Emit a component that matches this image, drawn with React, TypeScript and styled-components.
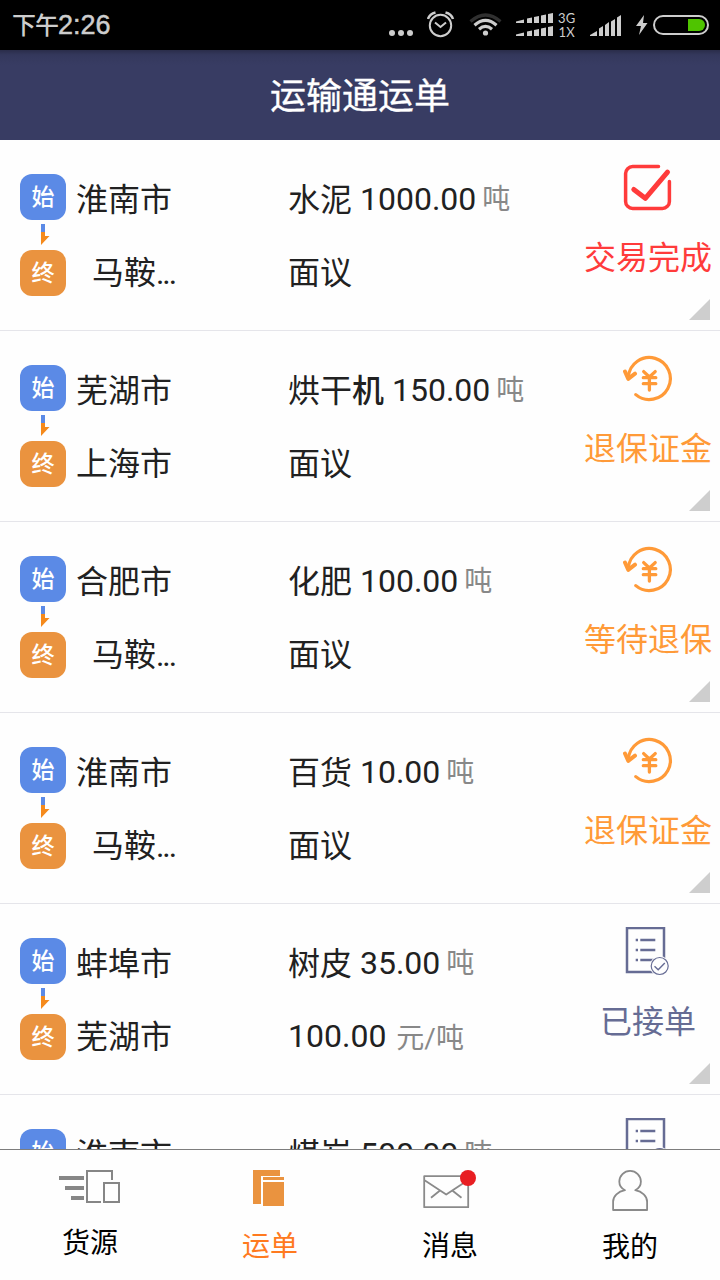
import React from 'react';
import styled, { createGlobalStyle } from 'styled-components';

const Global = createGlobalStyle`
  * { box-sizing: border-box; }
  body { margin: 0; background: #fff; }
  svg { display: block; flex: none; }
`;

const Screen = styled.div`
  display: flex;
  flex-direction: column;
  width: 720px;
  height: 1280px;
  overflow: hidden;
  background: #fefefe;
  color: #212121;
  font-family: Roboto, 'Noto Sans CJK SC', sans-serif;
`;

const StatusBar = styled.div`
  display: flex;
  flex: none;
  align-items: center;
  height: 50px;
  padding: 0 11px 0 12px;
  background: #000;
  color: #cdcdcd;
`;

const Clock = styled.div`
  display: flex;
  flex: 1;
  font: 500 24px/47px 'Noto Sans CJK SC', sans-serif;
  letter-spacing: -1px;
`;

const Digits = styled.span`
  font: 27px/50px 'Liberation Sans', sans-serif;
  letter-spacing: 0;
  -webkit-text-stroke: 0.5px #cdcdcd;
`;

const StatusIcon = styled.svg<{ $gap: number }>`
  height: 50px;
  margin-right: ${(p) => p.$gap}px;
`;

const Network = styled.div`
  width: 17px;
  margin: 0 15px 0 5px;
  font: 13px/14px Lato, sans-serif;
  letter-spacing: 0.3px;
  text-align: right;
  white-space: nowrap;
`;

const Header = styled.header`
  flex: none;
  height: 90px;
  background: linear-gradient(#2a2d4a 0, #34385c 5px, #383c63 15px);
  color: #fff;
  text-align: center;
  font-size: 36px;
  line-height: 95px;
  -webkit-text-stroke: 0.3px #fff;
`;

const List = styled.main`
  flex: 1;
  min-height: 0;
  overflow: hidden;
`;

const Row = styled.article`
  position: relative;
  display: flex;
  height: 191px;
  padding-left: 20px;
  border-bottom: 1px solid #e5e5ea;
`;

const Route = styled.div`
  display: flex;
  flex-direction: column;
  align-items: center;
  width: 46px;
  padding-top: 34px;
`;

const Stop = styled.div<{ $color: string }>`
  width: 46px;
  height: 46px;
  border-radius: 12px;
  background: ${(p) => p.$color};
  color: #fff;
  font-size: 23px;
  font-weight: 500;
  line-height: 48px;
  text-align: center;
`;

const Texts = styled.div<{ $width: number }>`
  width: ${(p) => p.$width}px;
  padding-top: 36px;
`;

const Cities = styled(Texts)`
  margin-left: 10px;
`;

const Line = styled.div<{ $indent?: boolean }>`
  height: 73px;
  padding-left: ${(p) => (p.$indent ? 16 : 0)}px;
  font-size: 32px;
  line-height: 48px;
  white-space: pre;
`;

const Amount = styled.span`
  position: relative;
  top: -1px;
`;

const Dots = styled.span`
  letter-spacing: -2.1px;
`;

const Heavy = styled.span`
  font-weight: 500;
`;

const Unit = styled.span<{ $gap: number; $raise: number }>`
  position: relative;
  top: ${(p) => -p.$raise}px;
  margin-left: ${(p) => p.$gap}px;
  color: #888;
  font-size: 28px;
`;

const State = styled.div<{ $color: string }>`
  display: flex;
  flex-direction: column;
  align-items: center;
  width: 144px;
  margin-left: auto;
  padding-top: 23px;
  color: ${(p) => p.$color};
  font-size: 32px;
  line-height: 48px;
`;

const StateLabel = styled.div`
  margin-top: 21px;
`;

const Corner = styled.div`
  position: absolute;
  right: 10px;
  bottom: 10px;
  width: 21px;
  height: 21px;
  background: #cecece;
  clip-path: polygon(100% 0, 100% 100%, 0 100%);
`;

const TabBar = styled.nav`
  display: flex;
  flex: none;
  height: 131px;
  border-top: 1px solid #7d7d7d;
  background: #fefefe;
`;

const Tab = styled.div<{ $active?: boolean }>`
  display: flex;
  flex: 1;
  flex-direction: column;
  align-items: center;
  padding-top: 20px;
  color: ${(p) => (p.$active ? '#ff7a1f' : '#000')};
  font-size: 28px;
  line-height: 40px;
`;

const TabLabel = styled.div<{ $top: number }>`
  margin-top: ${(p) => p.$top}px;
`;

const RouteArrow = () => (
  <svg width="46" height="30" viewBox="0 0 46 30">
    <path d="M21 4h4v8h-4z" fill="#5b8ae6" />
    <path d="M21 12h4v4h4.500L21 25z" fill="#f58a1c" />
  </svg>
);

const DoneIcon = () => (
  <svg width="50" height="50" fill="none" stroke="currentColor" strokeLinecap="round" strokeLinejoin="round">
    <path d="M35.500 3.600H9.600a7 7 0 0 0-7 7v27.800a7 7 0 0 0 7 7h29.800a7 7 0 0 0 7-7V18.500" strokeWidth="3.500" />
    <path d="M10.800 26.500 22.300 35.300 44.500 9.200" strokeWidth="5" />
  </svg>
);

const RefundIcon = () => (
  <svg width="50" height="50" fill="none" stroke="currentColor" strokeLinecap="round" strokeLinejoin="round">
    <path d="M5.400 23A21 21 0 1 1 12.800 40.600" strokeWidth="3.200" />
    <path d="M2 17.500 5.200 24.800 12 19.600" strokeWidth="4" />
    <path d="M20.700 17.600 26.400 23l5.800-5.400M26.400 23v13M20.300 23.700h12.500M20.300 29.700h12.500" strokeWidth="3.300" />
  </svg>
);

const AcceptedIcon = () => (
  <svg width="50" height="50" fill="none" stroke="currentColor">
    <path d="M4 1h37v44H4z" strokeWidth="2.500" />
    <path d="M12.700 13H15M17.300 13h15M12.700 23H15M17.300 23h15M12.700 33H15M17.300 33h15" strokeWidth="2.700" />
    <circle cx="36.700" cy="39" r="10" fill="#fefefe" stroke="none" />
    <circle cx="36.700" cy="39" r="8.500" strokeWidth="1.200" />
    <path d="M31.500 39.200 35.200 42.800 41.800 36" strokeWidth="1.400" />
  </svg>
);

type Kind = 'done' | 'refund' | 'accepted';
const states: Record<Kind, { color: string; Icon: React.FC }> = {
  done: { color: '#ff3b3b', Icon: DoneIcon },
  refund: { color: '#ff9a38', Icon: RefundIcon },
  accepted: { color: '#666c94', Icon: AcceptedIcon },
};

interface Waybill {
  from: string;
  to: string;
  goods: React.ReactNode;
  amount: string;
  price?: string;
  kind: Kind;
  label: string;
}

const waybills: Waybill[] = [
  { from: '淮南市', to: '马鞍', goods: '水泥', amount: '1000.00', kind: 'done', label: '交易完成' },
  { from: '芜湖市', to: '上海市', goods: <>烘干<Heavy>机</Heavy></>, amount: '150.00', kind: 'refund', label: '退保证金' },
  { from: '合肥市', to: '马鞍', goods: '化肥', amount: '100.00', kind: 'refund', label: '等待退保' },
  { from: '淮南市', to: '马鞍', goods: '百货', amount: '10.00', kind: 'refund', label: '退保证金' },
  { from: '蚌埠市', to: '芜湖市', goods: '树皮', amount: '35.00', price: '100.00', kind: 'accepted', label: '已接单' },
  { from: '淮南市', to: '芜湖市', goods: '煤炭', amount: '500.00', price: '100.00', kind: 'accepted', label: '已接单' },
];

const WaybillRow = ({ from, to, goods, amount, price, kind, label }: Waybill) => {
  const { color, Icon } = states[kind];
  const shortened = to.length < 3;
  return (
    <Row>
      <Route>
        <Stop $color="#5b8ae6">始</Stop>
        <RouteArrow />
        <Stop $color="#ea933f">终</Stop>
      </Route>
      <Cities $width={212}>
        <Line>{from}</Line>
        <Line $indent={shortened}>{to}{shortened && <Dots>...</Dots>}</Line>
      </Cities>
      <Texts $width={280}>
        <Line>{goods} <Amount>{amount}</Amount><Unit $gap={6} $raise={2}>吨</Unit></Line>
        <Line>{price ? <><Amount>{price}</Amount><Unit $gap={10} $raise={0}>元/吨</Unit></> : '面议'}</Line>
      </Texts>
      <State $color={color}>
        <Icon />
        <StateLabel>{label}</StateLabel>
      </State>
      <Corner />
    </Row>
  );
};

const GoodsIcon = () => (
  <svg width="64" height="42" viewBox="58 1170 64 42" fill="none" stroke="#868686">
    <path d="M59 1178h25M65 1188h19M71 1198h13" strokeWidth="4" />
    <path d="M101 1202H87v-31h25v9M104 1183h15v19h-15z" strokeWidth="2" />
  </svg>
);

const OrdersIcon = () => (
  <svg width="64" height="42" viewBox="238 1170 64 42" fill="#ea933f">
    <path d="M253 1170h27v6h-19v28h-8zM263 1177h21v3h-21zM263 1182h21v24h-21z" />
  </svg>
);

const MailIcon = () => (
  <svg width="64" height="42" viewBox="418 1170 64 42" fill="none" stroke="#8a8a8a" strokeWidth="1.800">
    <path d="M424.200 1176.200h44v31h-44zM424.200 1180l22 14.500 22-14.500M440 1190.500l-9 7.300M452.300 1190.500l9.200 7.300" strokeLinejoin="round" />
    <circle cx="468" cy="1178" r="8" fill="#e81e22" stroke="none" />
  </svg>
);

const PersonIcon = () => (
  <svg width="64" height="42" viewBox="598 1170 64 42" fill="none" stroke="#8a8a8a" strokeWidth="1.800" strokeLinejoin="round">
    <path d="M625 1190.200C621.500 1188.500 619.300 1185 619.300 1181.500a10.800 10.600 0 0 1 21.600 0c0 3.500-2.200 7-5.700 8.700 7 1.300 11.900 5.800 11.900 11.500v8.300h-34v-8.300c0-5.700 4.900-10.200 11.900-11.500z" />
  </svg>
);

export default function App() {
  return (
    <Screen>
      <Global />
      <StatusBar>
        <Clock>下午<Digits>2:26</Digits></Clock>
        <StatusIcon $gap={14} width="24" viewBox="389 0 24 50" fill="#cdcdcd">
          <circle cx="392" cy="33" r="3" /><circle cx="401" cy="33" r="3" /><circle cx="410" cy="33" r="3" />
        </StatusIcon>
        <StatusIcon $gap={14} width="28" viewBox="427 0 28 50" fill="none" stroke="#cdcdcd" strokeWidth="2">
          <circle cx="440.500" cy="25.500" r="10.700" />
          <path d="M435 22.500l5.500 4.500 5.500-4.500" />
          <path d="M428 19q1.500-5 7.500-6.500M453 19q-1.500-5-7.500-6.500" strokeWidth="2.500" />
        </StatusIcon>
        <StatusIcon $gap={13} width="34" viewBox="469 0 34 50" fill="none" stroke="#cdcdcd" strokeWidth="3.200">
          <path d="M470.500 21.500q15-13 30 0" stroke="#303030" />
          <path d="M474.500 25.200q11-9.500 22 0M479 29.200q6.500-5.500 13 0" />
          <circle cx="485.500" cy="33" r="2.600" fill="#cdcdcd" stroke="none" />
        </StatusIcon>
        <StatusIcon $gap={0} width="37" viewBox="516 0 37 50" fill="#cdcdcd">
          {[0, 13].map((dy) => (
            <path key={dy} transform={`translate(0 ${dy})`} d="M516 21.500l8-2V23h-8zM527 18.500l5-1V23h-5zM534 17l5-1v7h-5zM541 15.500l5-1V23h-5zM548 14l5-1v10h-5z" />
          ))}
        </StatusIcon>
        <Network>3G<br />1X</Network>
        <StatusIcon $gap={14} width="32" viewBox="590 0 32 50" fill="#cdcdcd">
          <path d="M590 35l7-4v5h-7zM599 28.500l4-2.500v10h-4zM605 25l4-3v14h-4zM611 21.500l4-2.500v17h-4zM617 17.500l4-2.500v21h-4z" />
        </StatusIcon>
        <StatusIcon $gap={5} width="12" viewBox="636 0 12 50" fill="#cdcdcd">
          <path d="M644 15l-8 11h5l-2 9 8.500-12H643z" />
        </StatusIcon>
        <StatusIcon $gap={0} width="56" viewBox="653 0 56 50" fill="none">
          <rect x="654" y="16" width="54" height="18" rx="9" stroke="#cdcdcd" strokeWidth="2" />
          <path d="M688 19h11a6 6 0 0 1 0 12h-11z" fill="#4fc400" />
        </StatusIcon>
      </StatusBar>
      <Header>运输通运单</Header>
      <List>
        {waybills.map((w, i) => <WaybillRow key={i} {...w} />)}
      </List>
      <TabBar>
        <Tab><GoodsIcon /><TabLabel $top={12}>货源</TabLabel></Tab>
        <Tab $active><OrdersIcon /><TabLabel $top={15}>运单</TabLabel></Tab>
        <Tab><MailIcon /><TabLabel $top={15}>消息</TabLabel></Tab>
        <Tab><PersonIcon /><TabLabel $top={16}>我的</TabLabel></Tab>
      </TabBar>
    </Screen>
  );
}
